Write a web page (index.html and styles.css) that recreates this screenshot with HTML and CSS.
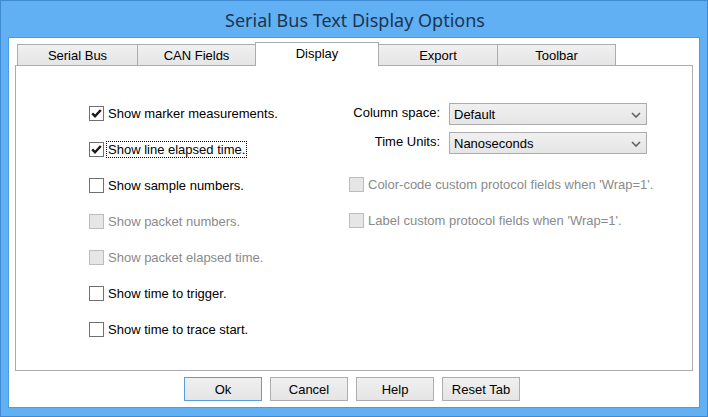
FILE: index.html
```html
<!DOCTYPE html>
<html>
<head>
<meta charset="utf-8">
<link rel="stylesheet" href="styles.css">
</head>
<body>
<div class="window">
  <div class="titlebar"><span class="title">Serial Bus Text Display Options</span></div>
  <div class="client">
    <div class="tabs">
      <div class="tab t1">Serial Bus</div>
      <div class="tab t2">CAN Fields</div>
      <div class="tab t3 active">Display</div>
      <div class="tab t4">Export</div>
      <div class="tab t5">Toolbar</div>
    </div>
    <div class="panel">
      <div class="col-left">
        <div class="check"><span class="box checked"><svg width="13" height="13" viewBox="0 0 13 13"><path d="M2.2 6.4 L5 9.2 L10.8 3" fill="none" stroke="#1a1a1a" stroke-width="2.4"/></svg></span><span class="lbl">Show marker measurements.</span></div>
        <div class="check"><span class="box checked"><svg width="13" height="13" viewBox="0 0 13 13"><path d="M2.2 6.4 L5 9.2 L10.8 3" fill="none" stroke="#1a1a1a" stroke-width="2.4"/></svg></span><span class="lbl focus">Show line elapsed time.</span></div>
        <div class="check"><span class="box"></span><span class="lbl">Show sample numbers.</span></div>
        <div class="check disabled"><span class="box"></span><span class="lbl">Show packet numbers.</span></div>
        <div class="check disabled"><span class="box"></span><span class="lbl">Show packet elapsed time.</span></div>
        <div class="check"><span class="box"></span><span class="lbl">Show time to trigger.</span></div>
        <div class="check"><span class="box"></span><span class="lbl">Show time to trace start.</span></div>
      </div>
      <div class="col-right">
        <div class="fields">
          <label class="flabel">Column space:</label>
          <div class="select"><span>Default</span><svg width="10" height="6" viewBox="0 0 10 6"><path d="M1 1 L5 5 L9 1" fill="none" stroke="#606060" stroke-width="1.6"/></svg></div>
          <label class="flabel">Time Units:</label>
          <div class="select"><span>Nanoseconds</span><svg width="10" height="6" viewBox="0 0 10 6"><path d="M1 1 L5 5 L9 1" fill="none" stroke="#606060" stroke-width="1.6"/></svg></div>
        </div>
        <div class="rchecks">
          <div class="check disabled"><span class="box"></span><span class="lbl">Color-code custom protocol fields when 'Wrap=1'.</span></div>
          <div class="check disabled"><span class="box"></span><span class="lbl">Label custom protocol fields when 'Wrap=1'.</span></div>
        </div>
      </div>
    </div>
    <div class="buttons">
      <button class="btn default">Ok</button>
      <button class="btn">Cancel</button>
      <button class="btn">Help</button>
      <button class="btn">Reset Tab</button>
    </div>
  </div>
</div>
</body>
</html>
```

FILE: styles.css
```css
* { box-sizing: border-box; }
html, body { margin: 0; padding: 0; }
body {
  width: 708px;
  height: 417px;
  overflow: hidden;
  font-family: "Liberation Sans", Arial, sans-serif;
  font-size: 13px;
  color: #000;
}
.window {
  width: 708px;
  height: 417px;
  background: #61b0f4;
  border: 1px solid #3f8ad2;
  padding: 0 7px 8px 7px;
  display: flex;
  flex-direction: column;
}
.titlebar {
  height: 36px;
  flex: none;
  display: flex;
  align-items: center;
  justify-content: center;
}
.title {
  font-family: "Noto Sans", "Open Sans", sans-serif;
  font-size: 18px;
  color: #1c3550;
  padding-top: 1px;
  padding-left: 2px;
}
.client {
  flex: 1;
  background: #fff;
  border: 1px solid #4b9be2;
  padding: 4px 6px 6px 6px;
  display: flex;
  flex-direction: column;
}
.tabs {
  height: 23px;
  display: flex;
  align-items: flex-end;
  padding-left: 2px;
  position: relative;
  z-index: 1;
}
.tab {
  height: 21px;
  border: 1px solid #acacac;
  border-bottom: none;
  background: linear-gradient(#f0f0f0, #e5e5e5);
  margin-left: -1px;
  display: flex;
  align-items: center;
  justify-content: center;
  padding-top: 1px;
}
.t1 { width: 121px; margin-left: 0; }
.t2 { width: 119px; }
.t3 { width: 124px; }
.t4 { width: 120px; }
.t5 { width: 119px; }
.tab.active {
  height: 24px;
  margin-bottom: -1px;
  background: #fff;
  padding-bottom: 3px;
}
.panel {
  height: 306px;
  flex: none;
  border: 1px solid #acacac;
  padding: 39px 0 0 73px;
  display: grid;
  grid-template-columns: 260px auto;
  align-items: start;
}
.col-left {
  display: flex;
  flex-direction: column;
  gap: 20px;
}
.check {
  height: 16px;
  display: flex;
  align-items: center;
  white-space: nowrap;
}
.box {
  width: 15px;
  height: 15px;
  border: 1px solid #707070;
  background: #fff;
  flex: none;
  display: flex;
  align-items: center;
  justify-content: center;
  margin-right: 4px;
}
.box svg { display: block; }
.lbl { line-height: 15px; }
.lbl.focus {
  outline: 1px dotted #000;
  outline-offset: 0;
  padding: 0 1px;
  margin-left: -1px;
}
.check.disabled .box {
  background: #e6e6e6;
  border-color: #bcbcbc;
}
.check.disabled .lbl { color: #8a8a8a; }
.col-right {
  margin-top: -2px;
  display: flex;
  flex-direction: column;
}
.fields {
  display: grid;
  grid-template-columns: 91px 198px;
  column-gap: 9px;
  row-gap: 7px;
  align-items: center;
}
.flabel {
  text-align: right;
  margin-top: -4px;
}
.select {
  height: 22px;
  border: 1px solid #acacac;
  background: linear-gradient(#f0f0f0, #e5e5e5);
  display: flex;
  align-items: center;
  justify-content: space-between;
  padding: 1px 5px 0 4px;
}
.select svg { display: block; }
.rchecks {
  margin-top: 22px;
  display: flex;
  flex-direction: column;
  gap: 20px;
}
.buttons {
  margin-top: 6px;
  height: 24px;
  display: flex;
  gap: 8px;
  padding-left: 169px;
}
.btn {
  width: 78px;
  height: 24px;
  font-family: "Liberation Sans", Arial, sans-serif;
  font-size: 13px;
  color: #000;
  border: 1px solid #adadad;
  background: linear-gradient(#f0f0f0, #e5e5e5);
  padding: 0;
  margin: 0;
}
.btn.default { border-color: #5a9fd9; }
```
